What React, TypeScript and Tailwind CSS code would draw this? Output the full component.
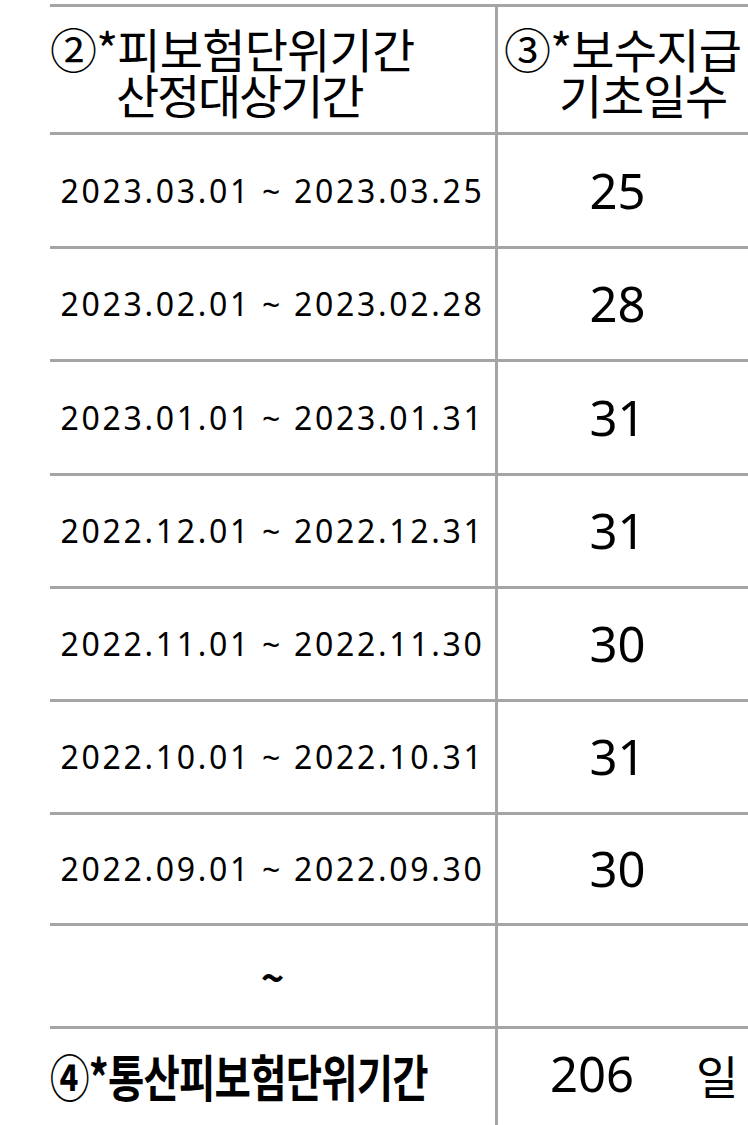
import React from "react";

const rows: { date: string; days: string; h: string }[] = [
  { date: "2023.03.01 ~ 2023.03.25", days: "25", h: "h-[114px]" },
  { date: "2023.02.01 ~ 2023.02.28", days: "28", h: "h-[113px]" },
  { date: "2023.01.01 ~ 2023.01.31", days: "31", h: "h-[114px]" },
  { date: "2022.12.01 ~ 2022.12.31", days: "31", h: "h-[113px]" },
  { date: "2022.11.01 ~ 2022.11.30", days: "30", h: "h-[113px]" },
  { date: "2022.10.01 ~ 2022.10.31", days: "31", h: "h-[113px]" },
  { date: "2022.09.01 ~ 2022.09.30", days: "30", h: "h-[111px]" },
];

export default function App() {
  return (
    <div
      className="w-[748px] h-[1125px] overflow-hidden bg-white pt-[4px] pl-[50px] text-black"
      style={{ fontFamily: "'Noto Sans', 'Noto Sans CJK KR', sans-serif" }}
    >
      <div className="w-[698px] border-t-[3px] border-[#a5a5a5]">
        {/* header */}
        <div className="flex h-[128px] border-b-[3px] border-[#a5a5a5]">
          <div
            className="w-[445px] flex flex-col justify-center pt-[2px] text-[47px] leading-[46px] whitespace-nowrap"
            style={{ fontFamily: "'Noto Sans CJK KR', sans-serif" }}
          >
            <div className="tracking-[-0.8px]">②*피보험단위기간</div>
            <div className="pl-[66px] tracking-[-2.2px]">산정대상기간</div>
          </div>
          <div
            className="flex-1 border-l-[3px] border-[#a5a5a5] flex flex-col justify-center pt-[2px] text-[47px] leading-[46px] whitespace-nowrap"
            style={{ fontFamily: "'Noto Sans CJK KR', sans-serif" }}
          >
            <div className="pl-[6px] tracking-[-0.8px]">③*보수지급</div>
            <div className="pl-[61px] tracking-[-1.2px]">기초일수</div>
          </div>
        </div>

        {rows.map((r) => (
          <div key={r.date} className={`flex border-b-[3px] border-[#a5a5a5] ${r.h}`}>
            <div className="w-[445px] flex items-center justify-center text-[32px] tracking-[2.7px] whitespace-nowrap">
              {r.date}
            </div>
            <div className="flex-1 border-l-[3px] border-[#a5a5a5] flex items-center justify-center pr-[11px] text-[49px]">
              {r.days}
            </div>
          </div>
        ))}

        {/* tilde row */}
        <div className="flex h-[103px] border-b-[3px] border-[#a5a5a5]">
          <div
            className="w-[445px] flex items-center justify-center text-[40px] font-bold"
            style={{ fontFamily: "'Noto Sans CJK KR', sans-serif" }}
          >
            ~
          </div>
          <div className="flex-1 border-l-[3px] border-[#a5a5a5]"></div>
        </div>

        {/* total row */}
        <div className="flex h-[100px]">
          <div className="w-[445px] flex items-center pb-[8px] whitespace-nowrap overflow-visible">
            <div
              className="text-[50px] font-bold tracking-[-1px] scale-x-[0.79] origin-left"
              style={{ fontFamily: "'Noto Sans CJK KR', sans-serif" }}
            >
              ④*통산피보험단위기간
            </div>
          </div>
          <div className="flex-1 border-l-[3px] border-[#a5a5a5] flex items-center pb-[10px] pl-[52px] whitespace-nowrap">
            <span className="text-[49px]">206</span>
            <span
              className="ml-[62px] text-[46px]"
              style={{ fontFamily: "'Noto Sans CJK KR', sans-serif" }}
            >
              일
            </span>
          </div>
        </div>
      </div>
    </div>
  );
}
